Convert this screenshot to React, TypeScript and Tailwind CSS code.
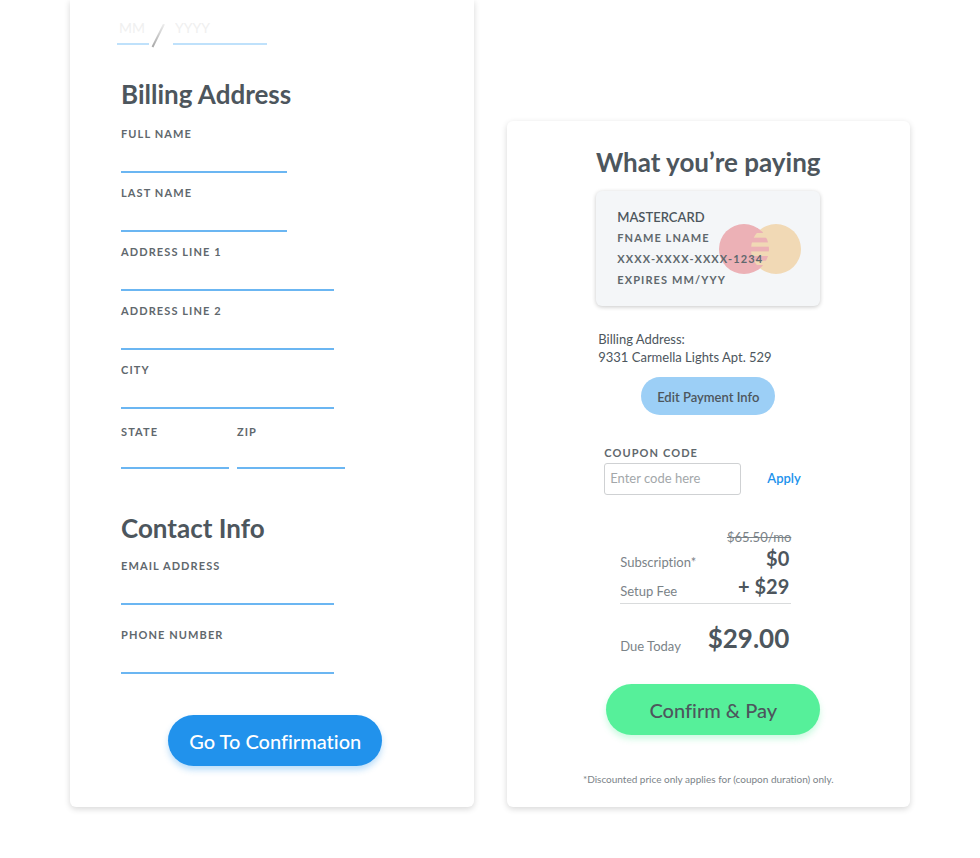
import React from "react";

type FieldProps = {
  id: string;
  label: string;
  type?: string;
  width: string;
  inputHeight?: string;
};

const labelStyle =
  "block h-4 text-[11px] leading-4 font-bold uppercase tracking-widest text-[#5f686d]";
const headingStyle = "text-[26px] leading-8 font-bold text-[#4d565d]";
const cardShadow = "shadow-[0_2px_6px_rgba(0,0,0,0.16)]";

function Field({ id, label, type = "text", width, inputHeight = "h-[31px]" }: FieldProps) {
  return (
    <div className={width}>
      <label htmlFor={id} className={labelStyle}>
        {label}
      </label>
      <input
        id={id}
        type={type}
        className={`block w-full border-b-2 border-[#6bb6f2] bg-transparent text-sm text-[#4d565d] outline-none ${inputHeight}`}
      />
    </div>
  );
}

function ExpiryRow() {
  const box =
    "block h-[29px] border-b-2 border-[#bfe1fb] bg-transparent text-sm text-[#4d565d] outline-none placeholder:text-[#f0f0f0]";
  return (
    <div className="-ml-1 flex">
      <input aria-label="Expiry month" placeholder="MM" className={`${box} w-8 pb-1 pl-0.5`} />
      <svg className="mx-0.5 mt-2 h-6 w-5" viewBox="0 0 20 24" fill="none" aria-hidden="true">
        <defs>
          <linearGradient id="slash" x1="0" y1="24" x2="0" y2="0" gradientUnits="userSpaceOnUse">
            <stop stopColor="#a3a3a3" />
            <stop offset="1" stopColor="#eeeeee" />
          </linearGradient>
        </defs>
        <path d="M1.5 23L13 0" stroke="url(#slash)" strokeWidth="2" />
      </svg>
      <input aria-label="Expiry year" placeholder="YYYY" className={`${box} w-[94px] pb-1 pl-0.5`} />
    </div>
  );
}

function CardLogo() {
  return (
    <svg className="absolute top-[33px] right-[19px] h-[50px] w-[82px]" viewBox="0 0 82 50" aria-hidden="true">
      <defs>
        <clipPath id="left-disc">
          <circle cx="25" cy="25" r="25" />
        </clipPath>
      </defs>
      <circle cx="25" cy="25" r="25" fill="#ecb1b6" />
      <circle cx="57" cy="25" r="25" fill="#f1d9b5" />
      <g clipPath="url(#left-disc)" fill="#ecb1b6">
        <rect x="32" y="4" width="19" height="5" />
        <rect x="32" y="13.7" width="19" height="4.7" />
        <rect x="32" y="22.7" width="19" height="4.7" />
        <rect x="32" y="32" width="19" height="4.7" />
        <rect x="32" y="41" width="19" height="5" />
      </g>
    </svg>
  );
}

function BillingCard() {
  return (
    <form
      className={`flex min-w-0 flex-col rounded-b-md bg-white pt-4 pr-11 pb-[41px] pl-[51px] ${cardShadow}`}
    >
      <ExpiryRow />
      <h2 className={`${headingStyle} mt-[30px]`}>Billing Address</h2>
      <div className="mt-4 flex flex-col gap-3">
        <Field id="full-name" label="Full Name" width="w-[166px]" />
        <Field id="last-name" label="Last Name" width="w-[166px]" />
        <Field id="address-1" label="Address Line 1" width="w-[213px]" />
        <Field id="address-2" label="Address Line 2" width="w-[213px]" />
        <Field id="city" label="City" width="w-[213px]" />
      </div>
      <div className="mt-[15px] flex gap-2">
        <Field id="state" label="State" width="w-[108px]" inputHeight="h-[29px]" />
        <Field id="zip" label="Zip" width="w-[108px]" inputHeight="h-[29px]" />
      </div>
      <h2 className={`${headingStyle} mt-[43px]`}>Contact Info</h2>
      <div className="mt-3.5 flex flex-col gap-[22px]">
        <Field id="email" label="Email Address" type="email" width="w-[213px]" />
        <Field id="phone" label="Phone Number" type="tel" width="w-[213px]" />
      </div>
      <button
        type="button"
        className="mt-[41px] h-[51px] w-[214px] self-center rounded-full bg-[#2192ec] text-xl font-medium text-white shadow-[0_4px_6px_rgba(33,146,236,0.3)]"
      >
        Go To Confirmation
      </button>
    </form>
  );
}

function PaymentCard() {
  return (
    <div className="relative h-[115px] rounded-md bg-[#f4f6f8] pt-4 pl-[21px] shadow-[0_1px_4px_rgba(0,0,0,0.22)]">
      <CardLogo />
      <div className="relative text-[11px] leading-[21px] font-bold tracking-widest text-[#5f686d]">
        <p className="text-[13px] leading-5 font-semibold tracking-normal text-[#4d565d]">MASTERCARD</p>
        <p>FNAME LNAME</p>
        <p>XXXX-XXXX-XXXX-1234</p>
        <p>EXPIRES MM/YYY</p>
      </div>
    </div>
  );
}

function SummaryCard() {
  return (
    <section
      className={`flex min-w-0 flex-col items-center rounded-md bg-white pt-[25px] pb-5 ${cardShadow}`}
    >
      <h2 className={headingStyle}>What you’re paying</h2>
      <div className="mt-[13px] flex w-[224px] flex-col">
        <PaymentCard />
        <div className="mt-6 pl-0.5 text-[13px] leading-[18px] text-[#4d565d]">
          <p>Billing Address:</p>
          <p>9331 Carmella Lights Apt. 529</p>
        </div>
        <button
          type="button"
          className="mt-[11px] h-[38px] w-[134px] self-center rounded-full bg-[#9ccff6] pt-1 text-[13px] font-semibold text-[#4d565d]"
        >
          Edit Payment Info
        </button>
        <div className="mt-[30px] pl-2">
          <label htmlFor="coupon" className={labelStyle}>
            Coupon Code
          </label>
          <div className="mt-0.5 flex items-center">
            <input
              id="coupon"
              placeholder="Enter code here"
              className="h-8 w-[137px] rounded-[3px] border border-[#cfd1d3] pb-0.5 pl-[5px] text-[13px] text-[#4d565d] placeholder:text-[#a3a7aa]"
            />
            <button type="button" className="ml-[26px] text-[13px] font-semibold text-[#2192ec]">
              Apply
            </button>
          </div>
        </div>

        <dl className="mt-[33px] ml-6 grid w-[171px] grid-cols-[auto_1fr] text-[13px] text-[#7b8388]">
          <dt className="self-end leading-4">Subscription*</dt>
          <dd className="text-right">
            <s className="block leading-[18px]">$65.50/mo</s>
            <span className="block pr-0.5 text-xl leading-6 font-bold text-[#4d565d]">$0</span>
          </dd>
          <dt className="self-end border-b border-[#d9dbdc] pb-1 leading-4">Setup Fee</dt>
          <dd className="h-[34px] border-b border-[#d9dbdc] pt-1 pr-0.5 text-right text-xl leading-6 font-bold text-[#4d565d]">
            + $29
          </dd>
          <dt className="self-end leading-4">Due Today</dt>
          <dd className="pt-[18px] pr-0.5 text-right text-[26px] leading-8 font-bold text-[#4d565d]">$29.00</dd>
        </dl>

        <button
          type="button"
          className="mt-[30px] h-[51px] w-[214px] self-end rounded-full bg-[#56f09a] text-xl font-medium text-[#4d565d] shadow-[0_4px_6px_rgba(86,240,154,0.3)]"
        >
          Confirm &amp; Pay
        </button>
      </div>
      <p className="mt-9 text-[10px] leading-4 text-[#7b8388]">
        *Discounted price only applies for (coupon duration) only.
      </p>
    </section>
  );
}

export default function App() {
  return (
    <main className="grid grid-cols-2 items-end gap-[33px] bg-white px-[70px] pb-[51px] font-['Lato','Open_Sans',sans-serif] [font-variant-ligatures:none]">
      <BillingCard />
      <SummaryCard />
    </main>
  );
}
